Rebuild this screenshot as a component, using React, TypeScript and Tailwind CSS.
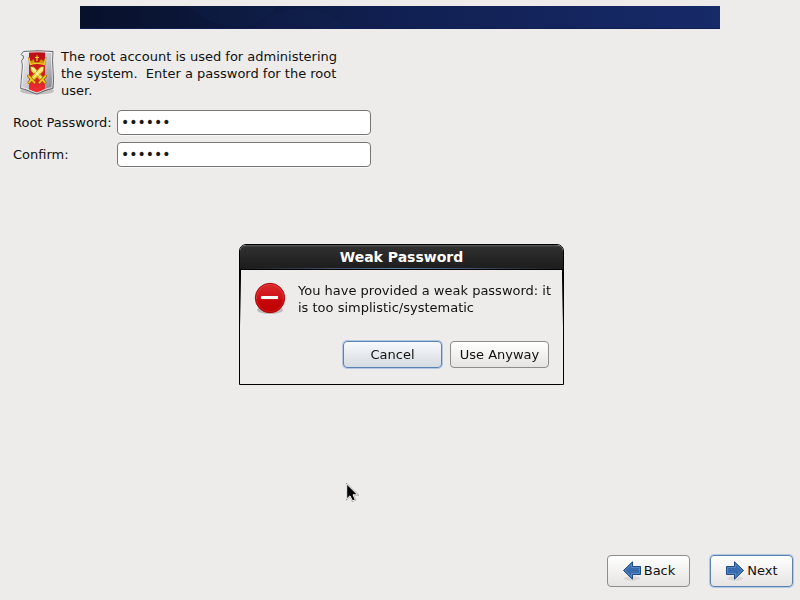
import { useState, type ReactNode } from "react";
import { clsx } from "clsx";

interface ActionButtonProps {
  children: ReactNode;
  className?: string;
  focused?: boolean;
  onClick?: () => void;
}

function ActionButton({
  children,
  className,
  focused,
  onClick,
}: ActionButtonProps) {
  return (
    <button
      type="button"
      onClick={onClick}
      className={clsx(
        "flex items-center justify-center rounded-[4px] border",
        focused
          ? "border-[#5b82b5] shadow-[0_0_0_1px_#b4c8e2]"
          : "border-[#8e8d8b]",
        className,
      )}
    >
      {children}
    </button>
  );
}

interface PasswordFieldProps {
  id: string;
  label: string;
  value: string;
  onChange: (value: string) => void;
}

function PasswordField({ id, label, value, onChange }: PasswordFieldProps) {
  return (
    <div className="flex items-center">
      <label htmlFor={id} className="w-[104px] whitespace-nowrap">
        {label}
      </label>
      <input
        id={id}
        type="password"
        value={value}
        onChange={(e) => onChange(e.target.value)}
        className="h-[25px] w-[254px] rounded-[4px] border border-[#777674] bg-white px-[3px] pb-0.5 text-[14px] text-[#1a1a1a] shadow-[0_1px_0_#f8f8f7] outline-none"
      />
    </div>
  );
}

function Banner() {
  return (
    <div className="mx-[10%] h-[23px] overflow-hidden border-b border-[#111b50] bg-linear-to-r from-[#08112b] via-[#112052] to-[#172a69]">
      <svg
        className="h-full w-full"
        viewBox="0 0 640 23"
        preserveAspectRatio="none"
        aria-hidden="true"
      >
        <path d="M108 0Q130 22 160 22Q187 19 197 0Z" fill="#12315f" opacity=".15" />
        <path d="M187 12Q218-5 245 7L270 23H175Z" fill="#1b2e70" opacity=".1" />
      </svg>
    </div>
  );
}

function ShieldIcon() {
  return (
    <svg
      width="38"
      height="50"
      viewBox="0 0 38 50"
      className="shrink-0"
      aria-hidden="true"
    >
      <defs>
        <linearGradient id="silver" x2="1" y2="1">
          <stop stopColor="#f4f4f5" />
          <stop offset=".5" stopColor="#c9c9cd" />
          <stop offset="1" stopColor="#77777f" />
        </linearGradient>
        <linearGradient id="red" x2="0" y2="1">
          <stop stopColor="#b50f14" />
          <stop offset=".4" stopColor="#d2151b" />
          <stop offset="1" stopColor="#ee2f35" />
        </linearGradient>
        <linearGradient id="gold" x2="0" y2="1">
          <stop stopColor="#fff38a" />
          <stop offset="1" stopColor="#e5b80c" />
        </linearGradient>
      </defs>
      <ellipse cx="19" cy="43" rx="17" ry="3.5" fill="#000" opacity=".18" />
      <path
        d="M5.5 3.5Q20 2 35 3.5Q34 12 35 22Q36 32 35 40.5Q31 41 26 43Q22 45 19 46Q15 45 11 43Q7 41 2.7 40.5Q3 33 4 24Q5 17 3.7 12.5Q6.5 10 5.2 7.7Q4 8 3.2 6.5Z"
        fill="url(#silver)"
        stroke="#66666d"
      />
      <path d="M11 4Q19 3 27 4V41.5L19 44.8L11 41.7Z" fill="url(#red)" />
      <path
        d="M6.5 4.6Q20 3.2 33.9 4.6Q33 13 34 23Q35 32 33.9 39.6Q30 40 25.5 42Q22 44 19 44.8Q15 44 11.5 42Q8 40 3.8 39.5Q4 33 5 24Q6 17 5 12.8"
        fill="none"
        stroke="#fff"
        strokeWidth=".9"
        opacity=".75"
      />
      <path
        d="M10.5 9L13 13L15.5 11L17 14H21L23 11L25.5 13L28 9L27 17Q19 15 11.5 17Z"
        fill="#d8940d"
        stroke="#8e3508"
        strokeWidth=".5"
      />
      <path
        d="M10.8 9.5L12.3 16.5Q19 14.5 26.3 16.5L27.7 9.5M19 7.5V13M17 9.5H21"
        fill="none"
        stroke="#f7cf36"
        strokeWidth="1.2"
      />
      <path
        d="M12.5 18.5L16 19L25.5 29.5L22.5 33L13 23Z"
        fill="url(#gold)"
        stroke="#9b6005"
        strokeWidth=".7"
      />
      <path
        d="M26 18.5L22.5 19L12.5 29.5L15.5 33L25.5 23Z"
        fill="url(#gold)"
        stroke="#9b6005"
        strokeWidth=".7"
      />
      <path d="M14 20L23.5 30.5M24.5 20L15 30.5" stroke="#fff9ad" />
      <path
        d="M10.5 28L16.5 34.5M27.5 28L21.5 34.5M13.5 31.5L11 34.5M24.5 31.5L27 34.5"
        stroke="#9b6005"
        strokeWidth="3"
        strokeLinecap="round"
      />
      <path
        d="M10.5 28L16.5 34.5M27.5 28L21.5 34.5M13.5 31.5L11 34.5M24.5 31.5L27 34.5"
        stroke="#f2ca20"
        strokeWidth="1.8"
        strokeLinecap="round"
      />
    </svg>
  );
}

function ErrorIcon() {
  return (
    <svg
      width="32"
      height="34"
      viewBox="0 0 32 34"
      className="shrink-0"
      aria-hidden="true"
    >
      <defs>
        <linearGradient id="stop" x2="0" y2="1">
          <stop stopColor="#d72b2f" />
          <stop offset=".5" stopColor="#cf1115" />
          <stop offset="1" stopColor="#c40003" />
        </linearGradient>
      </defs>
      <ellipse cx="16" cy="28" rx="13" ry="4" fill="#000" opacity=".2" />
      <circle cx="16" cy="16" r="14.7" fill="url(#stop)" stroke="#aa0709" />
      <circle cx="16" cy="16" r="13.6" fill="none" stroke="#e64a4c" opacity=".6" />
      <path d="M2 17A14 14 0 0 0 30 17Q16 20 2 17Z" fill="#b80000" opacity=".4" />
      <path d="M7 14H24V17H7Z" fill="#fff" />
    </svg>
  );
}

function ArrowIcon({ flipped }: { flipped?: boolean }) {
  return (
    <svg
      width="20"
      height="22"
      viewBox="0 -1 20 22"
      className={clsx("shrink-0", flipped && "-scale-x-100")}
      aria-hidden="true"
    >
      <ellipse cx="10" cy="18.5" rx="8" ry="2.2" fill="#000" opacity=".08" />
      <path
        d="M1.5 6.5H9.5V1.8L18.5 10.5L9.5 19.2V14.5H1.5Z"
        fill="#396cae"
        stroke="#204a87"
      />
      <path
        d="M2.5 7.5H10.5V4.2L17 10.5L10.5 16.8V13.5H2.5Z"
        fill="none"
        stroke="#6795ca"
        opacity=".65"
      />
    </svg>
  );
}

function Cursor() {
  return (
    <svg
      width="13"
      height="20"
      viewBox="0 0 13 20"
      className="pointer-events-none absolute top-[483px] left-[346px]"
      aria-hidden="true"
    >
      <path
        d="M.7 1V16L4 12.8L6.5 18L9.3 16.7L7 11.8H11.5Z"
        fill="#000"
        stroke="#777"
        strokeWidth="1.4"
      />
      <path
        d="M.7 1V16L4 12.8L6.5 18L9.3 16.7L7 11.8H11.5Z"
        fill="#000"
        stroke="#fff"
        strokeWidth="1"
      />
    </svg>
  );
}

function WeakPasswordDialog({ onClose }: { onClose: () => void }) {
  return (
    <div className="fixed inset-0 flex items-center justify-center pt-[29px] pl-[3px]">
      <div
        role="dialog"
        aria-labelledby="dialog-title"
        className="w-[325px] overflow-hidden rounded-t-[7px] border border-black bg-[#edeceb]"
      >
        <h2
          id="dialog-title"
          className="h-[25px] border-b border-black bg-linear-to-b from-[#5a5a5a] via-[#303030] via-10% to-[#1c1c1c] text-center text-[14px] leading-6 font-bold text-white"
        >
          Weak Password
          <span className="block h-px -translate-y-px bg-linear-to-r from-[#1c1c1c] via-[#5f86b0] to-[#1c1c1c]" />
        </h2>
        <div className="flex">
          <div className="h-14 w-px bg-linear-to-b from-black to-[#edeceb]" />
          <div className="flex-1 pt-3 pr-2 pb-4 pl-[13px]">
            <div className="flex gap-3">
              <ErrorIcon />
              <p className="w-64">
                You have provided a weak password: it is too
                simplistic/systematic
              </p>
            </div>
            <div className="mt-[25px] flex justify-end gap-2 pr-[5px]">
              <ActionButton
                focused
                onClick={onClose}
                className="h-[27px] w-[99px] bg-linear-to-b from-[#f7f9fc] to-[#d5dbe2]"
              >
                Cancel
              </ActionButton>
              <ActionButton
                onClick={onClose}
                className="h-[27px] w-[99px] bg-linear-to-b from-white to-[#e5e4e2]"
              >
                Use Anyway
              </ActionButton>
            </div>
          </div>
          <div className="h-14 w-px bg-linear-to-b from-black to-[#edeceb]" />
        </div>
      </div>
    </div>
  );
}

export default function App() {
  const [password, setPassword] = useState("secret");
  const [confirm, setConfirm] = useState("secret");
  const [dialogOpen, setDialogOpen] = useState(true);

  return (
    <div className="relative flex min-h-screen flex-col bg-[#edeceb] pt-1.5 font-['DejaVu_Sans',sans-serif] text-[13px] leading-[17px] text-[#111]">
      <Banner />

      <main className="flex-1 px-[13px] pt-[19px]">
        <div className="flex gap-[5px] pl-[5px]">
          <ShieldIcon />
          <p className="w-[290px]">
            The root account is used for administering the system.&nbsp; Enter a
            password for the root user.
          </p>
        </div>
        <form className="mt-[11px] flex flex-col gap-[7px]">
          <PasswordField
            id="root-password"
            label="Root Password:"
            value={password}
            onChange={setPassword}
          />
          <PasswordField
            id="confirm"
            label="Confirm:"
            value={confirm}
            onChange={setConfirm}
          />
        </form>
      </main>

      <footer className="flex justify-end gap-5 px-[7px] pb-[13px]">
        <ActionButton className="h-8 w-[83px] gap-0.5 bg-linear-to-b from-white to-[#e5e4e2] pb-0.5">
          <ArrowIcon flipped />
          Back
        </ActionButton>
        <ActionButton
          focused
          className="h-8 w-[83px] gap-0.5 bg-linear-to-b from-white to-[#e5e4e2] pb-0.5"
        >
          <ArrowIcon />
          Next
        </ActionButton>
      </footer>

      {dialogOpen && <WeakPasswordDialog onClose={() => setDialogOpen(false)} />}
      <Cursor />
    </div>
  );
}
